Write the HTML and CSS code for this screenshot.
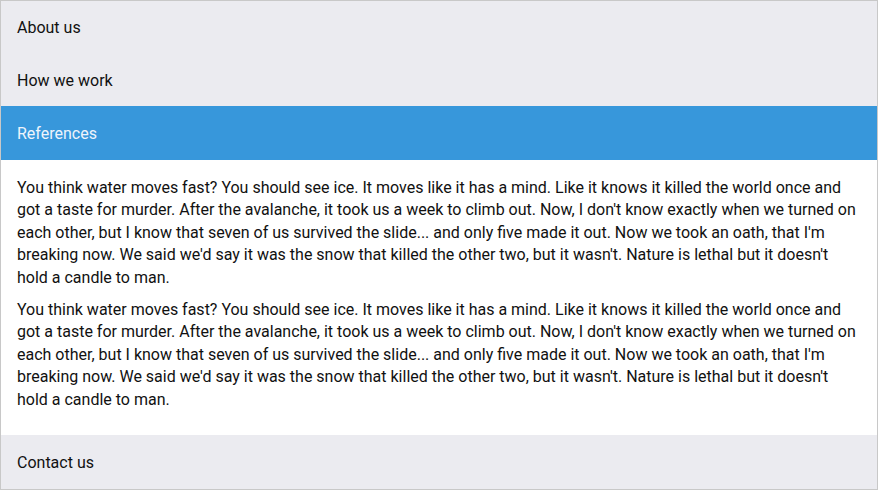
FILE: index.html
```html
<!DOCTYPE html>
<html>
<head>
<meta charset="utf-8">
<link rel="stylesheet" href="styles.css">
</head>
<body>
<div class="accordion">
  <div class="item"><div class="header">About us</div></div>
  <div class="item"><div class="header">How we work</div></div>
  <div class="item open">
    <div class="header">References</div>
    <div class="panel">
      <p>You think water moves fast? You should see ice. It moves like it has a mind. Like it knows it killed the world once and got a taste for murder. After the avalanche, it took us a week to climb out. Now, I don't know exactly when we turned on each other, but I know that seven of us survived the slide... and only five made it out. Now we took an oath, that I'm breaking now. We said we'd say it was the snow that killed the other two, but it wasn't. Nature is lethal but it doesn't hold a candle to man.</p>
      <p>You think water moves fast? You should see ice. It moves like it has a mind. Like it knows it killed the world once and got a taste for murder. After the avalanche, it took us a week to climb out. Now, I don't know exactly when we turned on each other, but I know that seven of us survived the slide... and only five made it out. Now we took an oath, that I'm breaking now. We said we'd say it was the snow that killed the other two, but it wasn't. Nature is lethal but it doesn't hold a candle to man.</p>
    </div>
  </div>
  <div class="item"><div class="header">Contact us</div></div>
</div>
</body>
</html>
```
FILE: styles.css
```css
html, body {
  margin: 0;
  padding: 0;
  background: #fff;
}
body {
  font-family: Roboto, "Liberation Sans", sans-serif;
  font-size: 16px;
  color: #111;
}
.accordion {
  width: 876px;
  height: 488px;
  border: 1px solid #c8c8c8;
  display: flex;
  flex-direction: column;
  overflow: hidden;
}
.header {
  background: #ebebf0;
  padding: 17px 16px 15px;
  line-height: 20.5px;
}
.open .header,
.item:last-child .header {
  line-height: 22px;
}
.open .header {
  background: #3797db;
  color: #eef4fb;
}
.panel {
  padding: 17px 16px 14px;
  line-height: 22.4px;
}
.panel p {
  margin: 0 0 10px;
}
```
